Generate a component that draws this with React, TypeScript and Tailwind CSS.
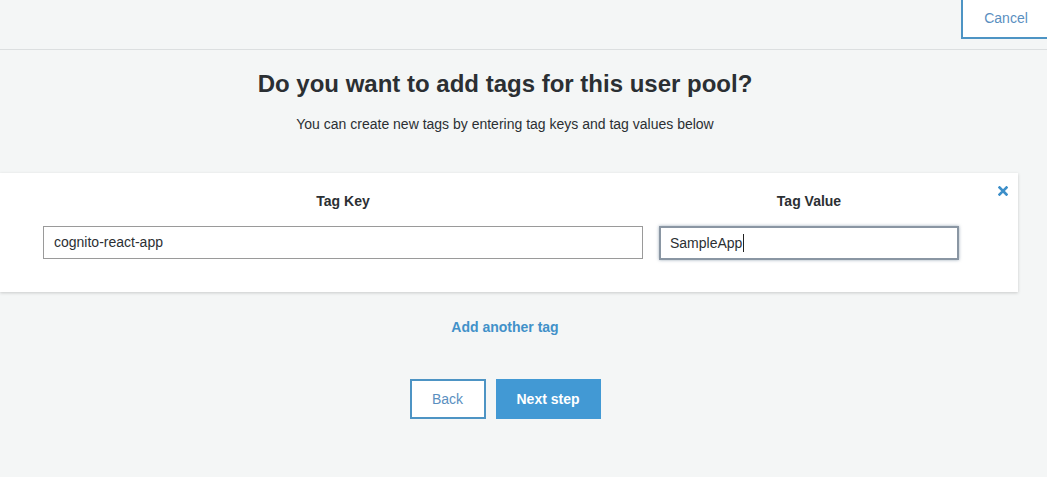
import React from "react";

export default function App() {
  return (
    <div className="w-[1047px] h-[477px] overflow-hidden bg-[#f4f6f6] text-[#2b2f33] font-['Liberation_Sans',Arial,sans-serif]">
      <div className="h-[50px] border-b border-[#dcdfe0] flex justify-end">
        <button className="mt-[-2px] h-[41px] w-[90px] ml-auto mr-[-4px] border-2 border-[#4d94c4] bg-white text-[#5a8fbf] text-[14px]">
          Cancel
        </button>
      </div>
      <div className="w-[1010px] flex flex-col items-center">
        <h1 className="mt-[20px] text-[24px] font-bold leading-[28px] text-[#2b2f33]">
          Do you want to add tags for this user pool?
        </h1>
        <p className="mt-[18px] text-[14px] leading-[16px] text-[#2b2f33]">
          You can create new tags by entering tag keys and tag values below
        </p>
      </div>
      <div className="relative mt-[41px] w-[1018px] h-[119px] bg-white shadow-[0_1px_3px_rgba(0,0,0,0.18)] flex pl-[43px] pt-[20px] gap-[16px]">
        <div className="flex flex-col items-center w-[600px]">
          <div className="text-[14px] font-bold leading-[16px] h-[16px]">Tag Key</div>
          <div className="mt-[17px] w-[600px] h-[33px] border border-[#9a9a9a] bg-white flex items-center pl-[10px] text-[14px]">
            cognito-react-app
          </div>
        </div>
        <div className="flex flex-col items-center w-[300px]">
          <div className="text-[14px] font-bold leading-[16px] h-[16px]">Tag Value</div>
          <div className="mt-[17px] w-[300px] h-[34px] border-2 border-[#8a96a3] bg-white flex items-center pl-[9px] text-[14px] shadow-[0_0_3px_rgba(60,90,120,0.5)]">
            SampleApp<span className="inline-block w-px h-[18px] bg-[#222] ml-px" />
          </div>
        </div>
        <div className="absolute top-[13px] right-[10px] text-[#3d8fc9]">
          <svg width="10" height="10" viewBox="0 0 10 10">
            <path d="M1.5 1.5 L8.5 8.5 M8.5 1.5 L1.5 8.5" stroke="currentColor" strokeWidth="2.6" strokeLinecap="square" />
          </svg>
        </div>
      </div>
      <div className="w-[1010px] flex flex-col items-center">
        <a className="mt-[27px] text-[14px] font-bold leading-[16px] text-[#4191c9]">Add another tag</a>
        <div className="mt-[44px] flex gap-[10px]">
          <button className="w-[76px] h-[40px] border-2 border-[#4d94c4] bg-white text-[#5a8fbf] text-[14px]">
            Back
          </button>
          <button className="w-[105px] h-[40px] bg-[#4299d4] text-white text-[14px] font-bold">
            Next step
          </button>
        </div>
      </div>
    </div>
  );
}
